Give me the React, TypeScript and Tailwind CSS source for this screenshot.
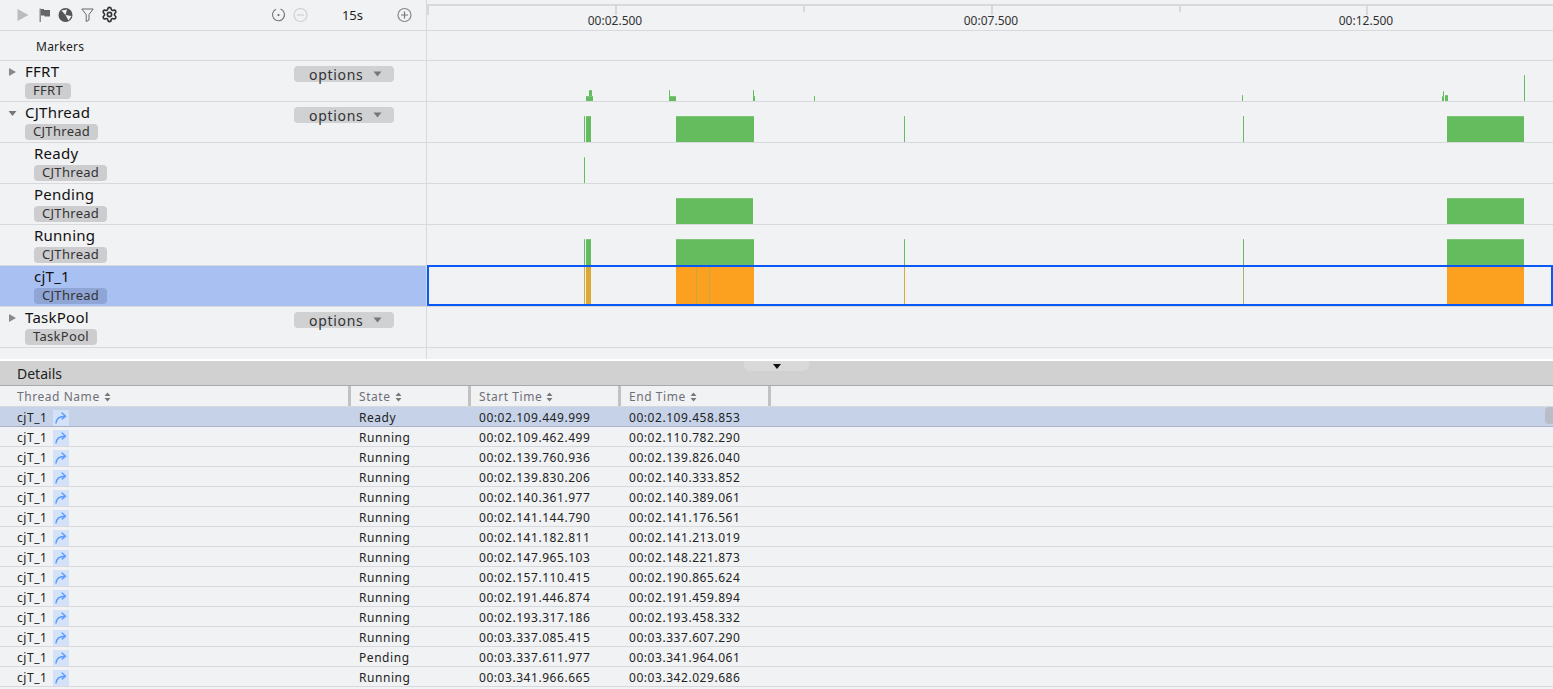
import { ReactNode } from "react";
import { Settings } from "lucide-react";

const GREEN = "#65bc5e";
const GREEN_TOP = "#7cc675";
const ORANGE = "#fba01f";
const GOLD = "#d9aa38";

type Bar = [x: number, y: number, w: number, h: number, fill?: string];

const ffrtBars: Bar[] = [
  [586, 35, 7, 5],
  [589, 29, 3, 6],
  [669, 35, 7, 5],
  [669, 29, 1, 6],
  [753, 29, 1, 11],
  [754, 35, 1, 5],
  [814, 35, 1, 5],
  [1242, 34, 1, 6],
  [1442, 35, 2, 5],
  [1443, 30, 1, 5],
  [1445, 34, 3, 6],
  [1524, 14, 1, 26],
];

const cjBars: Bar[] = [
  [584, 14, 1, 26],
  [586, 14, 5, 26],
  [676, 14, 78, 26],
  [904, 14, 1, 26],
  [1243, 14, 1, 26],
  [1447, 14, 77, 26],
];

const selectedBars: Bar[] = [
  [584, 1, 1, 37, GOLD],
  [586, 1, 5, 37, GOLD],
  [676, 1, 78, 37, ORANGE],
  [696, 1, 1, 37, "#c4a948"],
  [709, 1, 1, 37, "#c4a948"],
  [904, 1, 1, 37, GOLD],
  [1243, 1, 1, 37, "#a9b07c"],
  [1447, 1, 77, 37, ORANGE],
];

const detailRows = [
  ["Ready", "00:02.109.449.999", "00:02.109.458.853"],
  ["Running", "00:02.109.462.499", "00:02.110.782.290"],
  ["Running", "00:02.139.760.936", "00:02.139.826.040"],
  ["Running", "00:02.139.830.206", "00:02.140.333.852"],
  ["Running", "00:02.140.361.977", "00:02.140.389.061"],
  ["Running", "00:02.141.144.790", "00:02.141.176.561"],
  ["Running", "00:02.141.182.811", "00:02.141.213.019"],
  ["Running", "00:02.147.965.103", "00:02.148.221.873"],
  ["Running", "00:02.157.110.415", "00:02.190.865.624"],
  ["Running", "00:02.191.446.874", "00:02.191.459.894"],
  ["Running", "00:02.193.317.186", "00:02.193.458.332"],
  ["Running", "00:03.337.085.415", "00:03.337.607.290"],
  ["Pending", "00:03.337.611.977", "00:03.341.964.061"],
  ["Running", "00:03.341.966.665", "00:03.342.029.686"],
];

function Track({ bars }: { bars?: Bar[] }) {
  return (
    <svg className="block w-[1126px] h-[40px]" viewBox="427 0 1126 40">
      {bars?.map(([x, y, w, h, fill], i) => (
        <g key={i}>
          <rect x={x} y={y} width={w} height={h} fill={fill ?? GREEN} />
          {!fill && <rect x={x} y={y} width={w} height={1} fill={GREEN_TOP} />}
        </g>
      ))}
    </svg>
  );
}

function Tri({ down }: { down?: boolean }) {
  return (
    <svg className="absolute left-[8px] top-[5px]" width="9" height="10" viewBox="0 0 9 10">
      {down ? (
        <path d="M0.5 3h8L4.5 8z" fill="#777" />
      ) : (
        <path d="M1 1l7 4-7 4z" fill="#8a8a8a" />
      )}
    </svg>
  );
}

function TraceRow({
  title,
  tag,
  child,
  expand,
  options,
  selected,
  bars,
}: {
  title: string;
  tag: string;
  child?: boolean;
  expand?: "open" | "closed";
  options?: boolean;
  selected?: boolean;
  bars?: Bar[];
}) {
  return (
    <div className="flex h-[41px] border-b border-[#d8d9dc]">
      <div
        className={`relative flex w-[426px] shrink-0 ${child ? "pl-[34px]" : "pl-[25px]"} ${
          selected ? "bg-[#a9c1f2]" : ""
        }`}
      >
        {expand && (
          <div className="absolute left-0 top-[1px] h-[20px] w-[20px]">
            <Tri down={expand === "open"} />
          </div>
        )}
        <div className="flex flex-col items-start">
          <div className="h-[22px] text-[15px] leading-[21px] tracking-[0.25px] text-[#111]">
            {title}
          </div>
          <div
            className={`h-[16px] rounded-[4px] px-[8px] text-[13px] leading-[15px] tracking-[0.3px] text-[#333] ${
              selected ? "bg-[#8fa5d6]" : "bg-[#cdcdcf]"
            }`}
          >
            {tag}
          </div>
        </div>
        {options && (
          <div className="absolute left-[294px] top-[5px] flex h-[16px] w-[100px] items-center rounded-[4px] bg-[#d0d1d3] pl-[15px] pt-[2px] text-[14px] leading-[16px] tracking-[0.7px] text-[#333]">
            options
            <svg className="ml-[10px] mt-[-2px]" width="9" height="6" viewBox="0 0 9 6">
              <path d="M0.5 0.5h8L4.5 5.5z" fill="#777" />
            </svg>
          </div>
        )}
      </div>
      <div className="relative w-[1127px] shrink-0 border-l border-[#d8d9dc]">
        <Track bars={bars} />
        {selected && (
          <div className="absolute inset-x-0 top-[-1px] h-[41px] border-2 border-[#0a59f7]" />
        )}
      </div>
    </div>
  );
}

function ToolIcon({ w, children }: { w: number; children: ReactNode }) {
  return (
    <svg width={w} height={16} viewBox={`0 0 ${w} 16`} className="shrink-0">
      {children}
    </svg>
  );
}

function Toolbar() {
  return (
    <div className="relative flex h-[31px] w-[426px] items-center border-b border-[#d8d9dc] pb-[1px]">
      <div className="ml-[17px] flex items-center">
        <ToolIcon w={12}>
          <path d="M0.5 2v12l11-6z" fill="#bcbcbc" />
        </ToolIcon>
        <div className="ml-[10px]">
          <ToolIcon w={12}>
            <path d="M0.5 1.5h1.5v13.5H0.5z" fill="#8c8c8c" />
            <path d="M2 2h3v1h6v6.5H5.5v-1H2z" fill="#666" />
          </ToolIcon>
        </div>
        <div className="ml-[7px]">
          <ToolIcon w={15}>
            <circle cx="7.5" cy="8" r="7" fill="#555" />
            <path d="M7.5 8L3.5 3.5 9 2.5zM7.5 8l6 1-3 4.5zM7.5 8L2 11" fill="#f1f2f4" />
          </ToolIcon>
        </div>
        <div className="ml-[8px]">
          <ToolIcon w={13}>
            <path
              d="M0.8 2h11.4L8 7.5V13L5.2 14.5V7.5z"
              fill="none"
              stroke="#666"
              strokeWidth="1"
              strokeLinejoin="round"
            />
          </ToolIcon>
        </div>
        <div className="ml-[7px]">
          <Settings size={17} strokeWidth={2.3} color="#333" />
        </div>
      </div>
      <div className="absolute left-[271px] top-[7px] flex items-center">
        <ToolIcon w={15}>
          <path
            d="M9.5 2.1A6 6 0 1 1 5 2.3"
            fill="none"
            stroke="#777"
            strokeWidth="1.1"
          />
          <circle cx="7.5" cy="8" r="1.1" fill="#666" />
        </ToolIcon>
        <div className="ml-[7px]">
          <ToolIcon w={15}>
            <circle cx="7.5" cy="8" r="6.5" fill="none" stroke="#cfcfcf" strokeWidth="1.2" />
            <path d="M4 8h7" stroke="#cfcfcf" strokeWidth="1.2" />
          </ToolIcon>
        </div>
        <div className="w-[89px] text-center text-[13px] leading-[16px] text-[#222]">15s</div>
        <ToolIcon w={15}>
          <circle cx="7.5" cy="8" r="6.5" fill="none" stroke="#888" strokeWidth="1.2" />
          <path d="M4 8h7M7.5 4.5v7" stroke="#777" strokeWidth="1.2" />
        </ToolIcon>
      </div>
    </div>
  );
}

function Ruler() {
  return (
    <div className="relative h-[31px] w-[1127px] border-b border-l border-[#d8d9dc]">
      <svg className="block h-[16px] w-[1126px]" viewBox="427 0 1126 16">
        <rect x="427" y="4" width="1126" height="2" fill="#d9d9db" />
        <rect x="427" y="4" width="2" height="11" fill="#d9d9db" />
        <rect x="615" y="4" width="2" height="11" fill="#d9d9db" />
        <rect x="803" y="4" width="2" height="8" fill="#d9d9db" />
        <rect x="991" y="4" width="2" height="11" fill="#d9d9db" />
        <rect x="1179" y="4" width="2" height="8" fill="#d9d9db" />
        <rect x="1366" y="4" width="2" height="11" fill="#d9d9db" />
      </svg>
      <div className="absolute left-[158px] top-[13px] w-[60px] text-center text-[12px] leading-[16px] text-[#333]">
        00:02.500
      </div>
      <div className="absolute left-[534px] top-[13px] w-[60px] text-center text-[12px] leading-[16px] text-[#333]">
        00:07.500
      </div>
      <div className="absolute left-[909px] top-[13px] w-[60px] text-center text-[12px] leading-[16px] text-[#333]">
        00:12.500
      </div>
    </div>
  );
}

function HeadCell({ label, className }: { label: string; className: string }) {
  return (
    <div className={`flex h-[20px] items-center border-r-[3px] border-[#c2c2c4] pt-[2px] ${className}`}>
      <span className="text-[12px] leading-[18px] tracking-[0.55px] text-[#6f6f78]">{label}</span>
      <svg className="ml-[4px]" width="7" height="10" viewBox="0 0 7 10">
        <path d="M3.5 0.5L6.5 4h-6zM3.5 9.5L0.5 6h6z" fill="#777" />
      </svg>
    </div>
  );
}

function JumpIcon() {
  return (
    <div className="ml-[6px] flex h-[16px] w-[16px] items-center justify-center bg-[#d3e1f9]">
      <svg width="12" height="12" viewBox="0 0 12 12" fill="none">
        <path
          d="M1 11C1.5 6.5 4.5 4.2 10 4.2M7 1l3.6 3.2L7.2 7"
          stroke="#5b9cff"
          strokeWidth="1.4"
          strokeLinecap="round"
          strokeLinejoin="round"
        />
      </svg>
    </div>
  );
}

export default function App() {
  return (
    <div
      className="h-screen w-[1553px] overflow-hidden bg-[#f1f2f4]"
      style={{ fontFamily: '"Noto Sans", sans-serif' }}
    >
      <div className="flex">
        <Toolbar />
        <Ruler />
      </div>
      <div className="flex h-[30px] border-b border-[#d8d9dc]">
        <div className="w-[426px] shrink-0 pl-[36px] pt-[7px] text-[12px] leading-[18px] tracking-[0.25px] text-[#222]">
          Markers
        </div>
        <div className="flex-1 border-l border-[#d8d9dc]" />
      </div>

      <TraceRow title="FFRT" tag="FFRT" expand="closed" options bars={ffrtBars} />
      <TraceRow title="CJThread" tag="CJThread" expand="open" options bars={cjBars} />
      <TraceRow title="Ready" tag="CJThread" child bars={[[584, 14, 1, 26]]} />
      <TraceRow
        title="Pending"
        tag="CJThread"
        child
        bars={[
          [676, 14, 77, 26],
          [1447, 14, 77, 26],
        ]}
      />
      <TraceRow title="Running" tag="CJThread" child bars={cjBars} />
      <TraceRow title="cjT_1" tag="CJThread" child selected bars={selectedBars} />
      <TraceRow title="TaskPool" tag="TaskPool" expand="closed" options />
      <div className="flex h-[11px]">
        <div className="w-[426px] shrink-0" />
        <div className="flex-1 border-l border-[#d8d9dc]" />
      </div>

      <div className="h-[2px] bg-white" />

      <div className="relative h-[25px] border-b border-[#a9a9a9] bg-[#d1d1d1] pl-[17px] text-[14px] leading-[25px] text-[#222]">
        Details
        <div className="absolute left-[744px] top-0 flex h-[10px] w-[65px] justify-center rounded-b-[6px] bg-[#d9d9d9] pt-[3px]">
          <svg width="8" height="5" viewBox="0 0 8 5">
            <path d="M0 0h8L4 5z" fill="#111" />
          </svg>
        </div>
      </div>

      <div className="grid h-[21px] grid-cols-[351px_120px_150px_150px_1fr] border-b border-[#d8d9dc]">
        <HeadCell label="Thread Name" className="pl-[17px]" />
        <HeadCell label="State" className="pl-[8px]" />
        <HeadCell label="Start Time" className="pl-[8px]" />
        <HeadCell label="End Time" className="pl-[8px]" />
      </div>

      {detailRows.map(([state, start, end], i) => (
        <div
          key={start}
          className={`relative grid h-[20px] grid-cols-[351px_120px_150px_150px_1fr] items-center border-b pt-[2px] text-[12px] leading-[17px] tracking-[0.55px] text-[#222] ${
            i === 0 ? "border-[#a9b2c8] bg-[#c6d2e8]" : "border-[#d8d9dc]"
          }`}
        >
          <div className="flex items-center pl-[17px]">
            cjT_1
            <JumpIcon />
          </div>
          <div className="pl-[8px]">{state}</div>
          <div className="pl-[8px]">{start}</div>
          <div className="pl-[8px]">{end}</div>
          {i === 0 && (
            <div className="absolute right-0 top-0 h-[17px] w-[8px] rounded-l-[4px] bg-[#babdc6]" />
          )}
        </div>
      ))}
    </div>
  );
}
